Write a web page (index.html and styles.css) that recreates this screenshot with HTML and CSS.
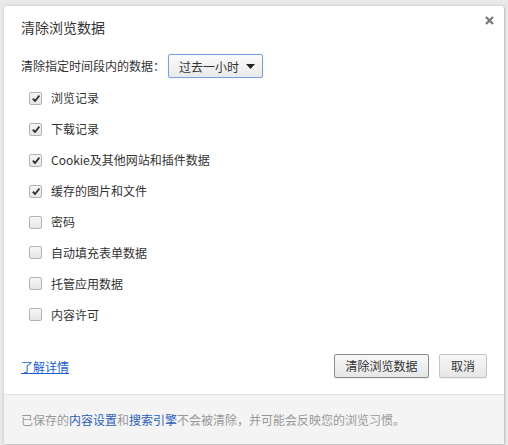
FILE: index.html
```html
<!DOCTYPE html>
<html lang="zh-CN">
<head>
<meta charset="utf-8">
<title>清除浏览数据</title>
<link rel="stylesheet" href="styles.css">
</head>
<body>
<div class="dialog">
  <button class="close" aria-label="关闭">
    <svg width="9" height="9" viewBox="0 0 9 9"><path d="M1 1L8 8M8 1L1 8" stroke="#777" stroke-width="2.2" stroke-linecap="butt"/></svg>
  </button>
  <div class="body">
    <h1 class="title">清除浏览数据</h1>
    <div class="range-row">
      <span class="range-label">清除指定时间段内的数据：</span>
      <div class="select">
        <span>过去一小时</span>
        <svg class="arrow" width="9" height="5" viewBox="0 0 9 5"><path d="M0 0H9L4.5 5Z" fill="#222"/></svg>
      </div>
    </div>
    <ul class="checks">
      <li><span class="box checked"></span>浏览记录</li>
      <li><span class="box checked"></span>下载记录</li>
      <li><span class="box checked"></span>Cookie及其他网站和插件数据</li>
      <li><span class="box checked"></span>缓存的图片和文件</li>
      <li><span class="box"></span>密码</li>
      <li><span class="box"></span>自动填充表单数据</li>
      <li><span class="box"></span>托管应用数据</li>
      <li><span class="box"></span>内容许可</li>
    </ul>
    <div class="actions">
      <a class="learn" href="#">了解详情</a>
      <div class="buttons">
        <button class="btn default">清除浏览数据</button>
        <button class="btn">取消</button>
      </div>
    </div>
  </div>
  <div class="footer">
    已保存的<a href="#">内容设置</a>和<a href="#">搜索引擎</a>不会被清除，并可能会反映您的浏览习惯。
  </div>
</div>
</body>
</html>
```

FILE: styles.css
```css
html, body {
  margin: 0;
  padding: 0;
}
body {
  background: #e9e9e9;
  font-family: "Noto Sans CJK SC", "Noto Sans", sans-serif;
  color: #333;
  font-size: 12px;
  width: 508px;
  height: 445px;
  overflow: hidden;
}
.dialog {
  position: relative;
  margin: 6px 4px 0 4px;
  width: 500px;
  height: 438px;
  background: #fff;
  border-radius: 3px 3px 0 0;
  box-shadow: 0 0 3px rgba(0,0,0,0.18), 1px 1px 2px rgba(0,0,0,0.12);
  display: flex;
  flex-direction: column;
}
.close {
  position: absolute;
  top: 10px;
  right: 10px;
  width: 9px;
  height: 9px;
  padding: 0;
  border: 0;
  background: none;
  display: flex;
}
.body {
  flex: 1;
  padding: 11px 17px 0 17px;
  display: flex;
  flex-direction: column;
}
.title {
  margin: 0;
  font-size: 14px;
  font-weight: normal;
  line-height: 20px;
  color: #333;
}
.range-row {
  margin-top: 17px;
  display: flex;
  align-items: center;
  height: 24px;
}
.range-label {
  line-height: 18px;
}
.select {
  margin-left: 3px;
  height: 22px;
  width: 76px;
  border: 1px solid #7aa3de;
  border-radius: 2px;
  background: linear-gradient(#fbfbfb, #e9e9e9);
  box-shadow: 0 0 1px rgba(77,144,254,0.5);
  display: flex;
  align-items: center;
  justify-content: space-between;
  padding: 0 7px 0 10px;
  box-sizing: content-box;
}
.arrow {
  display: block;
}
.checks {
  list-style: none;
  margin: 5px 0 0 0;
  padding: 0 0 0 8px;
}
.checks li {
  height: 30.9px;
  display: flex;
  align-items: center;
  line-height: 18px;
}
.box {
  width: 11px;
  height: 11px;
  border: 1px solid #b3b3b3;
  border-radius: 2px;
  background: linear-gradient(#f6f6f6, #e6e6e6);
  margin-right: 9px;
  flex: none;
  position: relative;
}
.box.checked::after {
  content: "";
  position: absolute;
  left: 2px;
  top: 2px;
  width: 8px;
  height: 7px;
  background: no-repeat center / 8px 7px url("data:image/svg+xml;utf8,<svg xmlns='http://www.w3.org/2000/svg' width='8' height='7' viewBox='0 0 8 7'><path d='M0.8 3.6L3 6L7.4 0.6' fill='none' stroke='%23333' stroke-width='1.9'/></svg>");
}
.actions {
  margin-top: 24px;
  display: flex;
  align-items: center;
  justify-content: space-between;
  height: 24px;
}
.learn {
  color: #1a5fd0;
  text-decoration: underline;
  line-height: 18px;
  position: relative;
  top: 1px;
}
.buttons {
  display: flex;
  gap: 10px;
}
.btn {
  font-family: inherit;
  font-size: 12px;
  color: #333;
  height: 24px;
  border: 1px solid #c4c4c4;
  border-radius: 2px;
  background: linear-gradient(#f8f8f8, #e6e6e6);
  box-shadow: 0 1px 0 rgba(0,0,0,0.06);
  padding: 0;
  line-height: 20px;
  width: 48px;
}
.btn.default {
  width: 95px;
  border-color: #8a8a8a;
}
.footer {
  height: 49px;
  border-top: 1px solid #e2e2e2;
  background: #f4f4f4;
  color: #999;
  padding: 0 17px;
  display: flex;
  align-items: center;
  line-height: 18px;
}
.footer a {
  color: #2a5db8;
  text-decoration: none;
}
```
